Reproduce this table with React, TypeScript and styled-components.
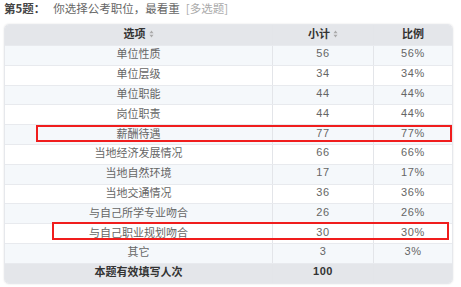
import React from 'react';
import styled, { createGlobalStyle } from 'styled-components';

const rows = [
  { label: '单位性质', count: '56', pct: '56%' },
  { label: '单位层级', count: '34', pct: '34%' },
  { label: '单位职能', count: '44', pct: '44%' },
  { label: '岗位职责', count: '44', pct: '44%' },
  { label: '薪酬待遇', count: '77', pct: '77%' },
  { label: '当地经济发展情况', count: '66', pct: '66%' },
  { label: '当地自然环境', count: '17', pct: '17%' },
  { label: '当地交通情况', count: '36', pct: '36%' },
  { label: '与自己所学专业吻合', count: '26', pct: '26%' },
  { label: '与自己职业规划吻合', count: '30', pct: '30%' },
  { label: '其它', count: '3', pct: '3%' },
];

const GlobalStyle = createGlobalStyle`
  body {
    margin: 0;
    background: #fff;
    font-family: "Noto Sans CJK SC", "Liberation Sans", sans-serif;
  }
`;

const Page = styled.div`
  width: 461px;
  height: 287px;
  padding: 0 8px 0 4px;
  box-sizing: border-box;
  overflow: hidden;
`;

const Heading = styled.div`
  height: 18px;
  display: flex;
  align-items: center;
  gap: 8px;
  font-size: 11.5px;
  line-height: 1;
  color: #666;
  margin-bottom: 6px;
`;

const QNum = styled.span`
  font-weight: 700;
  color: #444;
`;

const Kind = styled.span`
  color: #aaa;
  margin-left: -2px;
`;

const Table = styled.div`
  position: relative;
  border-radius: 5px;
  overflow: hidden;
  box-shadow: 0 0 2px rgba(0, 0, 0, 0.12);
  border: 1px solid #e6e8ec;
`;

const Row = styled.div<{ $kind: 'head' | 'odd' | 'even' | 'foot' }>`
  display: grid;
  grid-template-columns: 267px 101px 1fr;
  height: ${p => (p.$kind === 'head' || p.$kind === 'foot' ? '20px' : '19.8px')};
  background: ${p =>
    p.$kind === 'head' || p.$kind === 'foot' ? '#e4e6ea' : p.$kind === 'odd' ? '#f5f8fb' : '#fff'};
  border-top: ${p => (p.$kind === 'head' ? 'none' : '1px solid #e8eaee')};
  box-sizing: border-box;
  font-size: 11px;
  line-height: 1;
  color: ${p => (p.$kind === 'head' || p.$kind === 'foot' ? '#333' : '#666')};
  font-weight: ${p => (p.$kind === 'head' || p.$kind === 'foot' ? 700 : 400)};
`;

const Cell = styled.div`
  display: flex;
  align-items: center;
  justify-content: center;
  gap: 3px;
  padding-bottom: 3px;
  & + & {
    border-left: 1px solid #e3e5e9;
  }
`;

const Num = styled.span`
  font-family: "Liberation Sans", Arial, sans-serif;
  letter-spacing: 0.6px;
`;

const Marker = styled.div<{ $left: number; $right: number; $top: number; $h: number }>`
  position: absolute;
  left: ${p => p.$left}px;
  right: ${p => p.$right}px;
  top: ${p => p.$top}px;
  height: ${p => p.$h}px;
  border: 2px solid #f01d1d;
  box-sizing: border-box;
  pointer-events: none;
`;

const SortIcon = () => (
  <svg width="5" height="8" viewBox="0 0 5 8">
    <path d="M2.5 0.5 L4.5 3.2 L0.5 3.2 Z M2.5 7.5 L4.5 4.8 L0.5 4.8 Z" fill="#aaa" />
  </svg>
);

export default function App() {
  return (
    <Page>
      <GlobalStyle />
      <Heading>
        <QNum>第5题：</QNum>
        <span>你选择公考职位，最看重</span>
        <Kind>[多选题]</Kind>
      </Heading>
      <Table>
        <Row $kind="head">
          <Cell>选项 <SortIcon /></Cell>
          <Cell>小计<SortIcon /></Cell>
          <Cell>比例</Cell>
        </Row>
        {rows.map((r, i) => (
          <Row key={i} $kind={i % 2 === 0 ? 'odd' : 'even'}>
            <Cell>{r.label}</Cell>
            <Cell><Num>{r.count}</Num></Cell>
            <Cell><Num>{r.pct}</Num></Cell>
          </Row>
        ))}
        <Row $kind="foot">
          <Cell>本题有效填写人次</Cell>
          <Cell><Num>100</Num></Cell>
          <Cell></Cell>
        </Row>
        <Marker $left={31} $right={0} $top={100} $h={17} />
        <Marker $left={47} $right={3} $top={197} $h={18} />
      </Table>
    </Page>
  );
}
